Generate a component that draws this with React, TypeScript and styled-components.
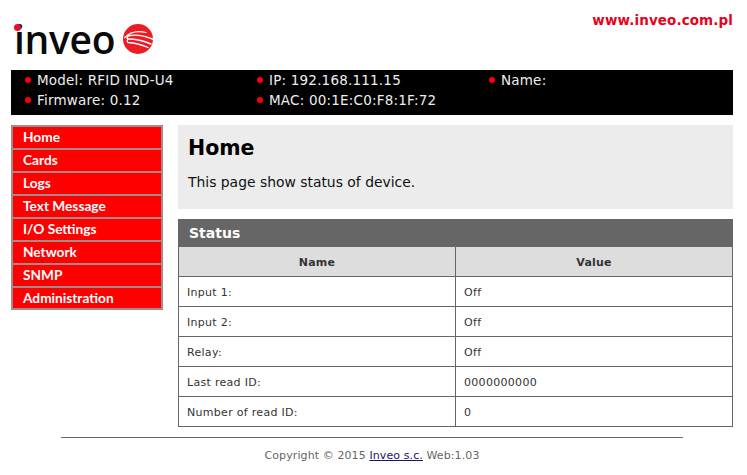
import React from "react";
import styled, { createGlobalStyle } from "styled-components";

const Global = createGlobalStyle`
  html, body { margin: 0; padding: 0; background: #fff; }
  body { font-family: "DejaVu Sans", Verdana, sans-serif; }
`;

const Page = styled.div`
  width: 722px;
  margin-left: 11px;
`;

const Header = styled.header`
  position: relative;
  height: 70px;
`;

const SiteLink = styled.a`
  position: absolute;
  right: 0;
  top: 12px;
  font-size: 13.5px;
  line-height: 16px;
  font-weight: bold;
  letter-spacing: 0.1px;
  color: #e8001c;
  text-decoration: none;
`;

const Logo = styled.div`
  position: absolute;
  left: 3px;
  top: 20px;
  display: flex;
  align-items: center;
  gap: 8px;
`;

const LogoWord = styled.span`
  position: relative;
  font-family: "Open Sans", sans-serif;
  font-size: 39px;
  font-weight: 600;
  line-height: 38px;
  letter-spacing: -0.3px;
  color: #0a0a0a;
`;

const LogoDot = styled.i`
  position: absolute;
  left: 0;
  top: 4px;
  width: 7px;
  height: 7px;
  border-radius: 50%;
  background: #e8102a;
`;

const InfoBar = styled.ul`
  display: grid;
  grid-template-columns: 232px 232px 1fr;
  grid-auto-rows: 20px;
  height: 45px;
  box-sizing: border-box;
  margin: 0;
  padding: 0 0 0 14px;
  list-style: none;
  background: #000;
  color: #eee;
  font-size: 13.5px;
  line-height: 20px;
`;

const InfoItem = styled.li`
  display: flex;
  align-items: center;
  gap: 6px;
  letter-spacing: 0.2px;
  &::before {
    content: "";
    width: 6px;
    height: 6px;
    border-radius: 50%;
    background: #f00;
  }
`;

const Body = styled.div`
  display: flex;
  align-items: flex-start;
  gap: 15px;
  margin-top: 10px;
`;

const Menu = styled.nav`
  display: flex;
  flex-direction: column;
  gap: 2px;
  width: 152px;
  box-sizing: border-box;
  border: 2px solid #a58a8a;
  background: #a58a8a;
`;

const MenuItem = styled.a`
  display: block;
  height: 21px;
  padding-left: 10px;
  background: #f00;
  color: #fff;
  font-family: Lato, sans-serif;
  font-size: 13.7px;
  font-weight: bold;
  line-height: 20px;
  &:last-child {
    height: 20px;
  }
`;

const Main = styled.main`
  flex: 1;
  min-width: 0;
`;

const Intro = styled.section`
  height: 84px;
  box-sizing: border-box;
  padding: 9px 10px 0;
  background: #ececec;
`;

const Title = styled.h1`
  margin: 0;
  font-size: 20.5px;
  line-height: 28px;
  font-weight: bold;
  color: #000;
`;

const Lead = styled.p`
  margin: 11px 0 0;
  font-size: 13.9px;
  line-height: 18px;
  color: #111;
`;

const StatusBar = styled.h2`
  margin: 10px 0 0;
  height: 28px;
  padding-left: 11px;
  background: #666;
  color: #fff;
  font-size: 14px;
  font-weight: bold;
  line-height: 28px;
`;

const Table = styled.table`
  width: 100%;
  table-layout: fixed;
  border-collapse: collapse;
  font-size: 11px;
  color: #333;
`;

const HeadCell = styled.th`
  height: 27px;
  padding: 2px 0 0;
  background: #ddd;
  border: 1px solid #666;
  border-top: 0;
  font-weight: bold;
  text-align: center;
  letter-spacing: 0.2px;
`;

const Cell = styled.td`
  height: 27px;
  padding: 2px 0 0 8px;
  border: 1px solid #666;
  letter-spacing: 0.3px;
`;

const Rule = styled.hr`
  width: 622px;
  height: 1px;
  margin: 10px 0 0 50px;
  border: 0;
  background: #666;
`;

const Footer = styled.footer`
  width: 722px;
  margin-top: 10px;
  text-align: center;
  font-size: 11px;
  line-height: 16px;
  color: #666;
  letter-spacing: 0.1px;
`;

const FooterLink = styled.a`
  color: #1c1466;
  text-decoration: underline;
`;

const LogoMark = () => (
  <svg width="30" height="30" viewBox="0 0 30 30" aria-hidden="true">
    <circle cx="15" cy="15" r="15" fill="#ec1c24" />
    <g fill="none" stroke="#fff" strokeLinecap="round">
      <path d="M1.7 13.5 C7 8 15 6.5 23 8.5" strokeWidth="1.2" />
      <path d="M5 12 C13 10 22 12 29.5 15" strokeWidth="1.4" />
      <path d="M5 12 C3.5 14 4 15 5 15 C13 15 21 17 28 20" strokeWidth="1.4" />
      <path d="M5 15 C4 17 4 18 5 18.5 C12 19 19 21 25 23.5" strokeWidth="1.3" />
    </g>
  </svg>
);

const menu = ["Home", "Cards", "Logs", "Text Message", "I/O Settings", "Network", "SNMP", "Administration"];
const rows: [string, string][] = [
  ["Input 1:", "Off"],
  ["Input 2:", "Off"],
  ["Relay:", "Off"],
  ["Last read ID:", "0000000000"],
  ["Number of read ID:", "0"],
];
const info = ["Model: RFID IND-U4", "IP: 192.168.111.15", "Name:", "Firmware: 0.12", "MAC: 00:1E:C0:F8:1F:72"];

export default function App() {
  return (
    <Page>
      <Global />
      <Header>
        <Logo>
          <LogoWord>
            inveo
            <LogoDot />
          </LogoWord>
          <LogoMark />
        </Logo>
        <SiteLink href="#">www.inveo.com.pl</SiteLink>
      </Header>
      <InfoBar>
        {info.map((t) => (
          <InfoItem key={t}>{t}</InfoItem>
        ))}
      </InfoBar>
      <Body>
        <Menu>
          {menu.map((m) => (
            <MenuItem key={m}>{m}</MenuItem>
          ))}
        </Menu>
        <Main>
          <Intro>
            <Title>Home</Title>
            <Lead>This page show status of device.</Lead>
          </Intro>
          <StatusBar>Status</StatusBar>
          <Table>
            <thead>
              <tr>
                <HeadCell>Name</HeadCell>
                <HeadCell>Value</HeadCell>
              </tr>
            </thead>
            <tbody>
              {rows.map(([k, v]) => (
                <tr key={k}>
                  <Cell>{k}</Cell>
                  <Cell>{v}</Cell>
                </tr>
              ))}
            </tbody>
          </Table>
        </Main>
      </Body>
      <Rule />
      <Footer>
        Copyright © 2015 <FooterLink href="#">Inveo s.c.</FooterLink> Web:1.03
      </Footer>
    </Page>
  );
}
